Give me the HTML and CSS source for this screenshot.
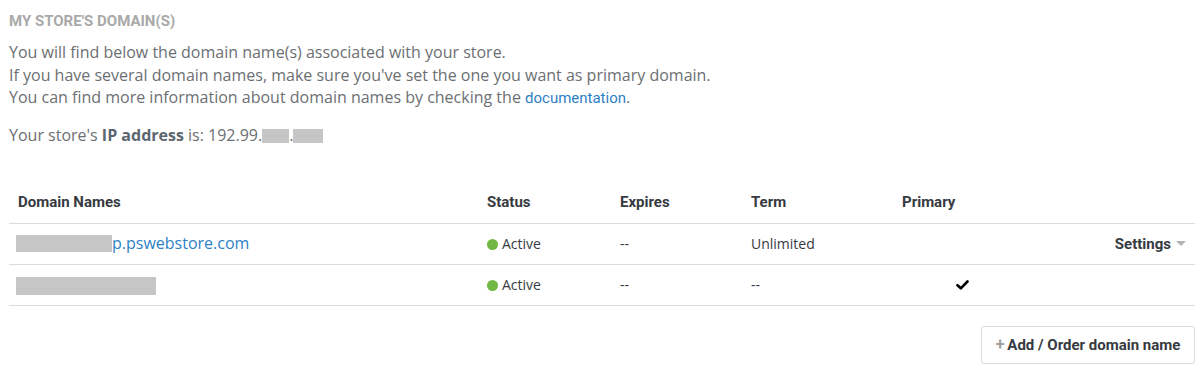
FILE: index.html
```html
<!DOCTYPE html>
<html lang="en">
<head>
    <meta charset="UTF-8">
    <title>My store's domain(s)</title>
    <link rel="stylesheet" href="styles.css">
</head>
<body>

<div id="domains">
    <h3 class="title">My store's domain(s)</h3>
    <p class="intro">
        You will find below the domain name(s) associated with your store.<br>
        If you have several domain names, make sure you've set the one you want as primary domain.<br>
        You can find more information about domain names by checking the <a href="#">documentation</a>.
    </p>
    <p class="ip">Your store's <b>IP address</b> is: 192.99.<span class="mask ip-a"></span>.<span class="mask ip-b"></span></p>

    <table class="domain-table">
        <thead>
            <tr>
                <th class="col-name">Domain Names</th>
                <th class="col-status">Status</th>
                <th class="col-expires">Expires</th>
                <th class="col-term">Term</th>
                <th class="col-primary">Primary</th>
                <th class="col-actions"></th>
            </tr>
        </thead>
        <tbody>
            <tr>
                <td><span class="mask name-a"></span><a class="domain" href="#">p.pswebstore.com</a></td>
                <td><span class="dot"></span>Active</td>
                <td>--</td>
                <td>Unlimited</td>
                <td></td>
                <td class="actions"><span class="settings">Settings<span class="caret"></span></span></td>
            </tr>
            <tr>
                <td><span class="mask name-b"></span></td>
                <td><span class="dot"></span>Active</td>
                <td>--</td>
                <td>--</td>
                <td class="check">
                    <svg width="13" height="10" viewBox="0 0 13 10"><path d="M1.5 5.2 L4.8 8.3 L11.5 1.5" fill="none" stroke="#000" stroke-width="2.6" stroke-linecap="round" stroke-linejoin="round"/></svg>
                </td>
                <td></td>
            </tr>
        </tbody>
    </table>

    <div class="footer">
        <button type="button" class="add-btn"><span class="plus">+</span>Add / Order domain name</button>
    </div>
</div>

</body>
</html>
```

FILE: styles.css
```css
body {
    margin: 0;
    padding: 0;
    background-color: #fff;
    font-family: "Open Sans", sans-serif;
    color: #6c6f73;
}

#domains {
    padding: 11px 9px 0 9px;
}

.title {
    margin: 0 0 10px 0;
    font-family: Roboto, sans-serif;
    font-weight: 700;
    font-size: 15px;
    text-transform: uppercase;
    color: #a9a9a9;
    line-height: 20px;
}

.intro {
    margin: 0;
    font-size: 16px;
    line-height: 22.5px;
}

.intro a {
    font-family: Roboto, sans-serif;
    font-size: 15px;
    color: #2f7fc6;
    text-decoration: none;
}

.ip {
    margin: 14px 0 0 0;
    font-size: 16px;
    line-height: 22px;
}

.ip b {
    color: #5c6670;
}

.mask {
    display: inline-block;
    background-color: #c6c6c6;
    vertical-align: middle;
}

.ip-a {
    width: 27px;
    height: 14px;
}

.ip-b {
    width: 30px;
    height: 14px;
}

.domain-table {
    width: 100%;
    border-collapse: collapse;
    margin-top: 35px;
}

.domain-table th,
.domain-table td {
    text-align: left;
    padding: 0 0 0 9px;
    border-bottom: 1px solid #dcdcdc;
}

.domain-table th {
    height: 42px;
    font-family: Roboto, sans-serif;
    font-weight: 700;
    font-size: 15px;
    color: #363a41;
    vertical-align: middle;
}

.domain-table td {
    height: 40px;
    font-size: 14px;
    color: #363a41;
}

.col-name { width: 460px; }
.col-status { width: 124px; }
.col-expires { width: 122px; }
.col-term { width: 142px; }
.col-primary { width: 150px; }

.name-a {
    width: 96px;
    height: 17px;
    margin-left: -2px;
}

.name-b {
    width: 140px;
    height: 18px;
    margin-left: -2px;
}

.domain {
    font-size: 16px;
    color: #2f7fc6;
    text-decoration: none;
    vertical-align: middle;
}

.dot {
    display: inline-block;
    width: 11px;
    height: 11px;
    border-radius: 50%;
    background-color: #70b843;
    margin: 0 4px 0 0;
    vertical-align: -1px;
}

.check {
    padding-left: 63px !important;
}

.check svg {
    display: block;
}

.actions {
    text-align: right !important;
    padding-right: 9px !important;
}

.settings {
    font-family: Roboto, sans-serif;
    font-weight: 700;
    font-size: 15px;
    color: #363a41;
}

.caret {
    display: inline-block;
    width: 0;
    height: 0;
    margin-left: 5px;
    border-left: 5px solid transparent;
    border-right: 5px solid transparent;
    border-top: 5px solid #b3b3b3;
    vertical-align: 3px;
}

.footer {
    display: flex;
    justify-content: flex-end;
    margin-top: 20px;
}

.add-btn {
    cursor: pointer;
    width: 214px;
    height: 38px;
    padding: 0;
    background-color: #fff;
    border: 1px solid #dcdcdc;
    border-radius: 3px;
    box-shadow: 0 1px 1px rgba(0, 0, 0, 0.06);
    font-family: Roboto, sans-serif;
    font-weight: 700;
    font-size: 15px;
    color: #363a41;
}

.plus {
    color: #a0a0a0;
    font-size: 16px;
    margin-right: 3px;
}
```
